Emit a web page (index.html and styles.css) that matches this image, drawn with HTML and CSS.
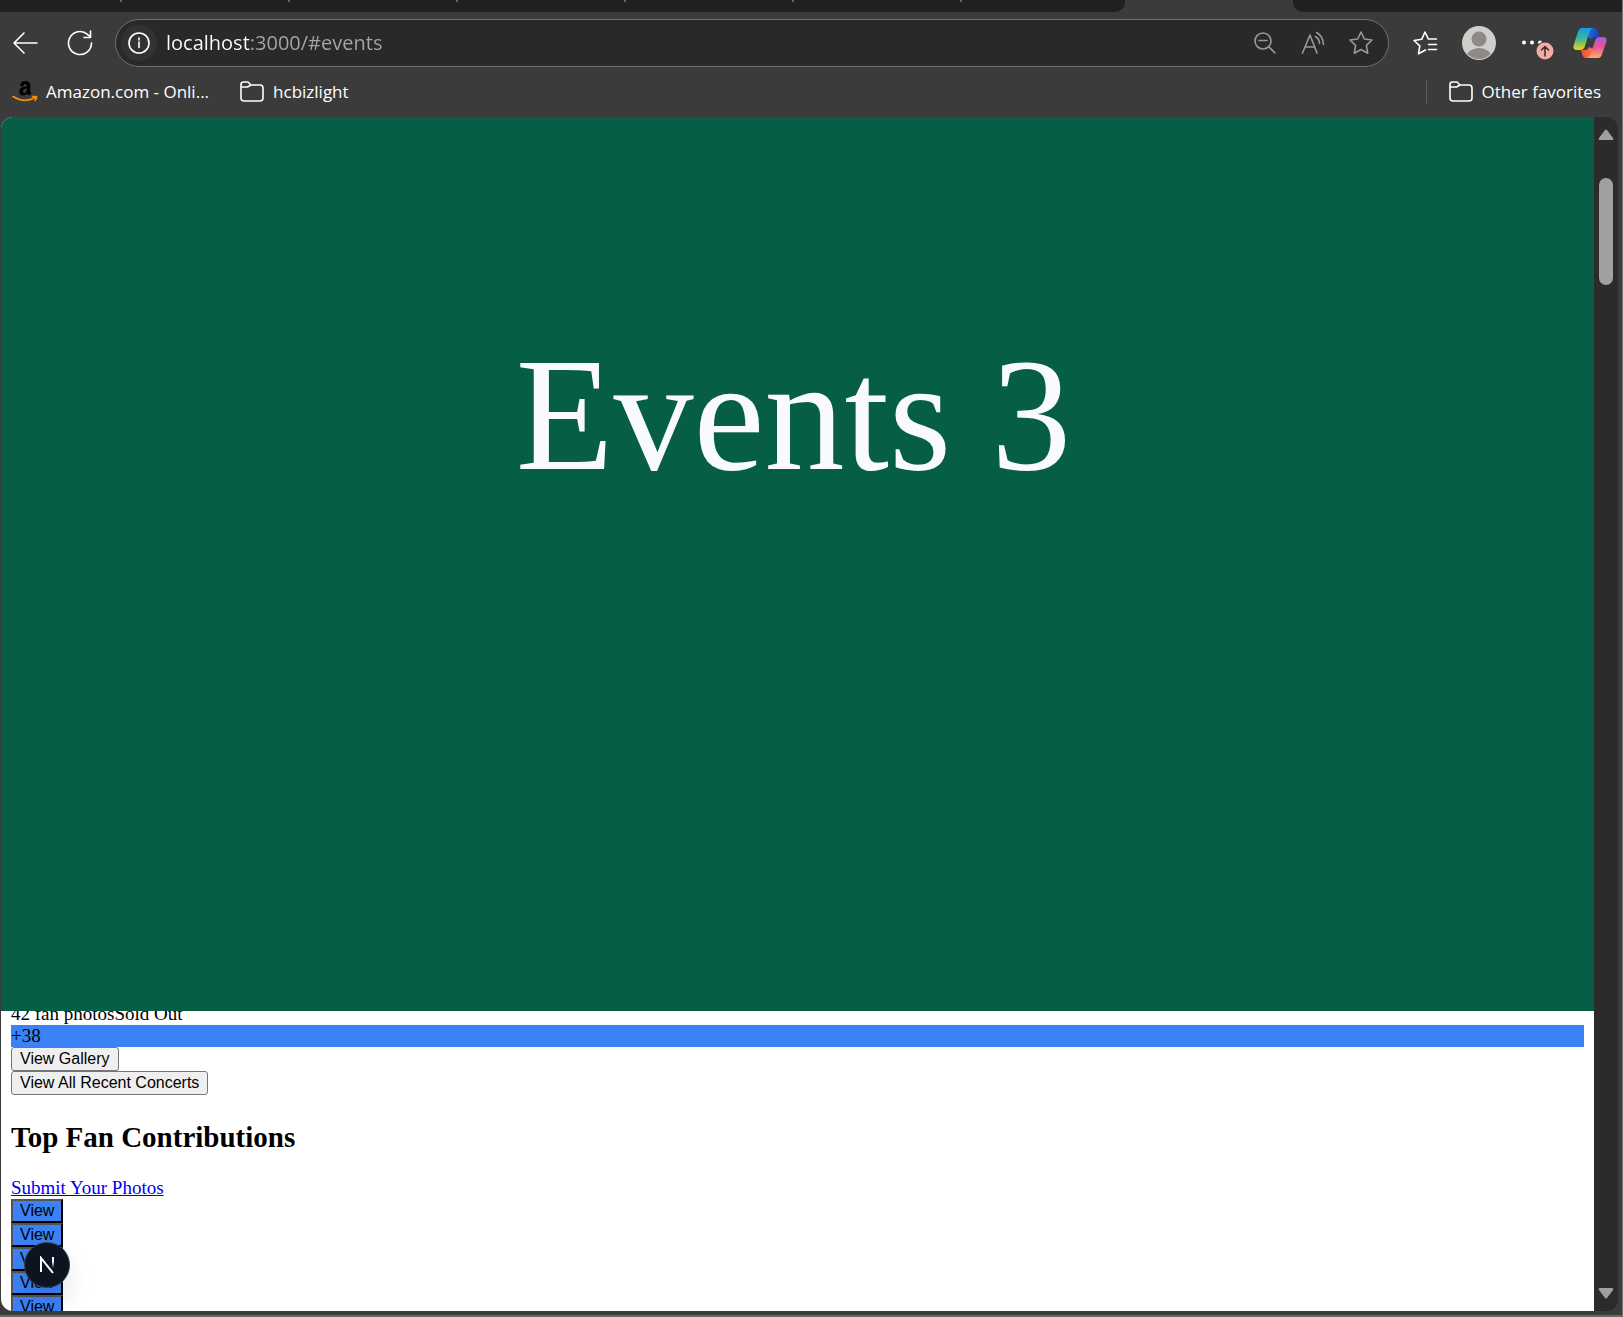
FILE: index.html
```html
<!DOCTYPE html>
<html lang="en">
<head>
<meta charset="utf-8">
<title>Events</title>
<link rel="stylesheet" href="styles.css">
</head>
<body>
<div class="window">
  <div class="tabs">
    <div class="tabs-before"><i class="tab tab-first"></i><i class="tab"></i><i class="tab"></i><i class="tab"></i><i class="tab"></i><i class="tab"></i></div>
    <div class="tab-active"></div>
    <div class="tabs-after"></div>
  </div>
  <header class="toolbar">
    <button class="tool" aria-label="Back"><svg width="28" height="24" viewBox="0 0 28 24"><path d="M12 2 2 12l10 10M2 12h23"/></svg></button>
    <button class="tool" aria-label="Refresh"><svg width="26" height="26" viewBox="0 0 26 26"><path d="M24.500 13a11.500 11.500 0 1 1-4-8.700L23.500 7M23.500 1v6.500H17"/></svg></button>
    <form class="address">
      <button type="button" class="info" aria-label="Site information"><svg width="24" height="24" viewBox="0 0 24 24"><circle cx="12" cy="12" r="10"/><path d="M12 11v5.500M12 7v2"/></svg></button>
      <input class="url" type="text" aria-label="Address" value="localhost:3000/#events" spellcheck="false">
      <button type="button" class="inner" aria-label="Zoom out"><svg width="24" height="24" viewBox="0 0 24 24"><circle cx="10" cy="10" r="8"/><path d="m16 16 6 6M6 9.500h8"/></svg></button>
      <button type="button" class="inner" aria-label="Read aloud"><svg width="24" height="24" viewBox="0 0 24 24"><path d="M1.500 22 9 4l7 18M4 16h10M14.500 5.500q4 2.500 4 7M15.500 1.500q6.500 3.500 7 12"/></svg></button>
      <button type="button" class="inner" aria-label="Add to favorites"><svg width="26" height="26" viewBox="0 0 26 26"><path d="m13 2 3.300 7 7.700 1-5.600 5.400 1.300 7.800L13 19.500l-6.700 3.700 1.300-7.800L2 10l7.700-1z"/></svg></button>
    </form>
    <button class="tool" aria-label="Favorites"><svg width="26" height="26" viewBox="0 0 26 26"><path d="m13.500 20-7 3.800 1.300-7.900L2 10.500l7.700-1.200L13 2l3.300 7h8.200M16.500 14.500h8M16.500 19.500h8"/></svg></button>
    <button class="tool" aria-label="Profile"><svg class="avatar" width="34" height="34" viewBox="0 0 34 34"><defs><clipPath id="disc"><circle cx="17" cy="17" r="16"/></clipPath></defs><circle cx="17" cy="17" r="17" fill="#d0cecb"/><g clip-path="url(#disc)" fill="#8d8986"><circle cx="17" cy="13" r="7.500"/><ellipse cx="17" cy="31" rx="12.500" ry="9"/></g></svg></button>
    <button class="tool" aria-label="Settings and more"><svg class="solid" width="34" height="34" viewBox="0 0 34 34"><g fill="#fff"><circle cx="8" cy="16.500" r="2"/><circle cx="16" cy="16.500" r="2"/><circle cx="24" cy="16.500" r="2"/></g><circle cx="29" cy="25" r="9.500" fill="#3b3b3b"/><circle cx="29" cy="25" r="8.500" fill="#f6aaa5"/><path d="M29 30V20.500m-3.500 3.500 3.500-3.500 3.500 3.500" fill="none" stroke="#3b2b2b" stroke-width="1.500"/></svg></button>
    <button class="tool copilot" aria-label="Copilot"><svg class="solid" width="34" height="32" viewBox="0 0 34 32"><defs>
      <linearGradient id="c1" x1="0" y1="0" x2="0" y2="1"><stop offset="0" stop-color="#159bea"/><stop offset=".5" stop-color="#3fb795"/><stop offset="1" stop-color="#f3d414"/></linearGradient>
      <linearGradient id="c2" x1="0" y1="0" x2="0" y2="1"><stop offset="0" stop-color="#a957ec"/><stop offset=".5" stop-color="#ee558b"/><stop offset="1" stop-color="#ffac70"/></linearGradient>
      <linearGradient id="c3" x1="0" y1="0" x2="1" y2="0"><stop offset="0" stop-color="#1682e8"/><stop offset="1" stop-color="#203fc0"/></linearGradient>
      <linearGradient id="c4" x1="0" y1="0" x2="1" y2="0"><stop offset="0" stop-color="#f54c28"/><stop offset="1" stop-color="#f98650"/></linearGradient></defs>
      <path d="M10 1h11q3 0 4 4l1 5h-4q-3 0-4 2l-3-2z" fill="url(#c3)"/>
      <path d="M24 31H13q-3 0-4-4l-1-4h4q3 0 4-3l4 2z" fill="url(#c4)"/>
      <path d="M9 1h11q-3 1-4 5l-4 13q-1 4-5 4H4q-5 0-3-6L5 5q1-4 4-4z" fill="url(#c1)"/>
      <path d="M25 31H14q3-1 4-5l4-12q1-4 5-4h3q5 0 3 6l-4 11q-1 4-4 4z" fill="url(#c2)"/></svg></button>
  </header>
  <nav class="favorites" aria-label="Favorites bar">
    <a href="#amazon" class="bookmark"><svg class="solid" width="26" height="24" viewBox="0 0 26 24"><path d="M8 6q.4-5 5.300-5t5 4.500v5q0 1.500 1.200 2.800L17 15.500 15.200 13.600q-2 2-4.200 1.900-3.700-.2-3.700-4 0-4.800 7.400-5V5.300q0-1.500-1.500-1.500-1.600 0-1.900 2.600zM14.700 8.400q-3.800.1-3.800 2.700 0 1.900 1.600 1.900 2.200-.3 2.200-3.600z" fill="#000"/><path d="M1 16.500q11 7 22 1.300M20.500 16.500h4q.5 2-1.500 4" fill="none" stroke="#f29111" stroke-width="1.600"/></svg>Amazon.com - Onli...</a>
    <a href="#hcbizlight" class="bookmark"><svg width="26" height="24" viewBox="0 0 26 24"><path d="M2 7V4.500Q2 2 4.500 2H9l3 3h9q3 0 3 3v10q0 3-3 3H5q-3 0-3-3zM2 7h6.500L12 5"/></svg>hcbizlight</a>
    <a href="#other" class="bookmark other"><svg width="26" height="24" viewBox="0 0 26 24"><path d="M2 7V4.500Q2 2 4.500 2H9l3 3h9q3 0 3 3v10q0 3-3 3H5q-3 0-3-3zM2 7h6.500L12 5"/></svg>Other favorites</a>
  </nav>
  <div class="viewport">
    <main class="page">
      <section class="hero" id="events"><h1>Events 3</h1></section>
      <section class="content">
        <div class="photos"><span>42 fan photos</span><span>Sold Out</span></div>
        <div class="more">+38</div>
        <button class="plain">View Gallery</button>
        <button class="plain">View All Recent Concerts</button>
        <h2>Top Fan Contributions</h2>
        <a class="submit" href="#submit">Submit Your Photos</a>
        <button class="view">View</button>
        <button class="view">View</button>
        <button class="view">View</button>
        <button class="view">View</button>
        <button class="view">View</button>
      </section>
      <button class="badge" aria-label="Open developer tools"><svg width="16" height="18" viewBox="0 0 16 18"><defs><linearGradient id="n1" x1="0" y1="0" x2="0" y2="1"><stop offset=".4" stop-color="#fff"/><stop offset="1" stop-color="#fff" stop-opacity="0"/></linearGradient></defs><path d="M2 16V2l12 15" fill="none" stroke="#fff" stroke-width="2"/><path d="M13 1h2v11h-2z" fill="url(#n1)"/></svg></button>
    </main>
    <div class="scrollbar" aria-hidden="true">
      <svg width="16" height="12" viewBox="0 0 16 12"><path d="M7 1q1-1 2 0l6 8q1 2-1 2H2q-2 0-1-2z"/></svg>
      <div class="track"><div class="thumb"></div></div>
      <svg width="16" height="12" viewBox="0 0 16 12"><path d="M7 11q1 1 2 0l6-8q1-2-1-2H2Q0 1 1 3z"/></svg>
    </div>
  </div>
</div>
</body>
</html>
```
FILE: styles.css
```css
* { box-sizing: border-box; }

body {
  margin: 0;
  background: #3b3b3b;
  font-family: "Liberation Serif", serif;
}

button { margin: 0; font: inherit; }

.window {
  display: flex;
  flex-direction: column;
  height: 100vh;
  overflow: hidden;
  border-right: 1px solid #777;
  border-bottom: 2px solid #6b6666;
}

/* Tab strip */
.tabs { display: flex; height: 12px; }
.tabs-before {
  display: flex;
  width: 1125px;
  background: #202020;
  border-bottom-right-radius: 10px;
}
.tab { width: 168px; height: 2px; border-right: 2px solid #666; }
.tab-first { width: 122px; }
.tab-active { width: 168px; }
.tabs-after { flex: 1; background: #202020; border-bottom-left-radius: 10px; }

/* Toolbar */
.toolbar {
  display: flex;
  align-items: center;
  gap: 2px;
  height: 61px;
  padding-right: 3px;
}

.toolbar svg, .bookmark svg {
  flex: none;
  fill: none;
  stroke: #fff;
  stroke-width: 1.6;
  stroke-linecap: round;
  stroke-linejoin: round;
}
.toolbar .solid, .toolbar .avatar, .bookmark .solid { stroke: none; overflow: visible; }

.tool, .info, .inner {
  display: flex;
  flex: none;
  align-items: center;
  justify-content: center;
  padding: 0;
  border: 0;
  background: none;
}
.tool { width: 52px; height: 44px; }
.copilot { width: 58px; }

.address {
  display: flex;
  flex: 1;
  align-items: center;
  min-width: 0;
  height: 48px;
  margin: 0 8px 0 7px;
  padding: 0 3px 0 5px;
  border: 1px solid #707070;
  border-radius: 24px;
  background: #292929;
}
.info { width: 36px; height: 36px; border-radius: 50%; background: #323232; }
.inner { width: 48px; height: 40px; }
.toolbar .inner svg { stroke: #999; }

.url {
  flex: 1;
  min-width: 0;
  margin-left: 9px;
  padding: 0;
  border: 0;
  outline: 0;
  background: linear-gradient(to right, #fff 84px, #a6a6a6 84px);
  -webkit-background-clip: text;
  background-clip: text;
  color: transparent;
  font: 20px/30px "Open Sans", sans-serif;
}

/* Favorites bar */
.favorites {
  display: flex;
  align-items: center;
  gap: 30px;
  height: 44px;
  padding: 0 21px 6px 12px;
}
.bookmark {
  display: flex;
  align-items: center;
  gap: 8px;
  height: 24px;
  color: #fff;
  font: 17px/24px "Open Sans", sans-serif;
  text-decoration: none;
}
.other {
  margin-left: auto;
  padding-left: 21px;
  border-left: 1px solid #5c5c5c;
}

/* Page area */
.viewport {
  display: flex;
  flex: 1;
  min-height: 0;
  margin: 0 4px 4px 1px;
  border-radius: 12px;
  overflow: hidden;
}
.page {
  position: relative;
  display: flex;
  flex: 1;
  flex-direction: column;
  min-width: 0;
  background: #fff;
}
.hero {
  flex: 1;
  padding: 206px 8px 0 0;
  background: #075e46;
  color: #f8fafc;
  text-align: center;
}
.hero h1 { margin: 0; font-size: 160px; line-height: 184px; font-weight: 400; }

.content {
  display: flex;
  flex: 0 0 300px;
  flex-direction: column;
  align-items: flex-start;
  padding: 0 10px;
  overflow: hidden;
  font-size: 19px;
  line-height: 22px;
}
.photos { flex: none; margin-top: -8px; }
.more { flex: none; align-self: stretch; background: #3b82f6; }
.plain, .view {
  flex: none;
  height: 24px;
  padding: 0 8px;
  color: #000;
  font: 16px/20px "Liberation Sans", sans-serif;
}
.plain { border: 1px solid #767676; border-radius: 3px; background: #efefef; }
.view { padding: 0 7px; border: 2px outset #000; background: #3b82f6; }
.content h2 { margin: 26px 0 24px; font-size: 29px; line-height: 32px; }
.submit { color: #0000ee; }

.badge {
  position: absolute;
  left: 23px;
  bottom: 23px;
  display: flex;
  align-items: center;
  justify-content: center;
  width: 46px;
  height: 46px;
  padding: 0;
  border: 1px solid #3a414b;
  border-radius: 50%;
  background: #0b1420;
  box-shadow: 0 16px 32px -8px rgba(0, 0, 0, .24);
}

.scrollbar {
  display: flex;
  flex-direction: column;
  align-items: center;
  width: 24px;
  padding: 12px 0;
  background: #2b2b2b;
}
.scrollbar svg { fill: #a0a0a0; }
.track { flex: 1; padding: 37px 0; }
.thumb { width: 14px; height: 107px; border-radius: 7px; background: #a0a0a0; }
```
